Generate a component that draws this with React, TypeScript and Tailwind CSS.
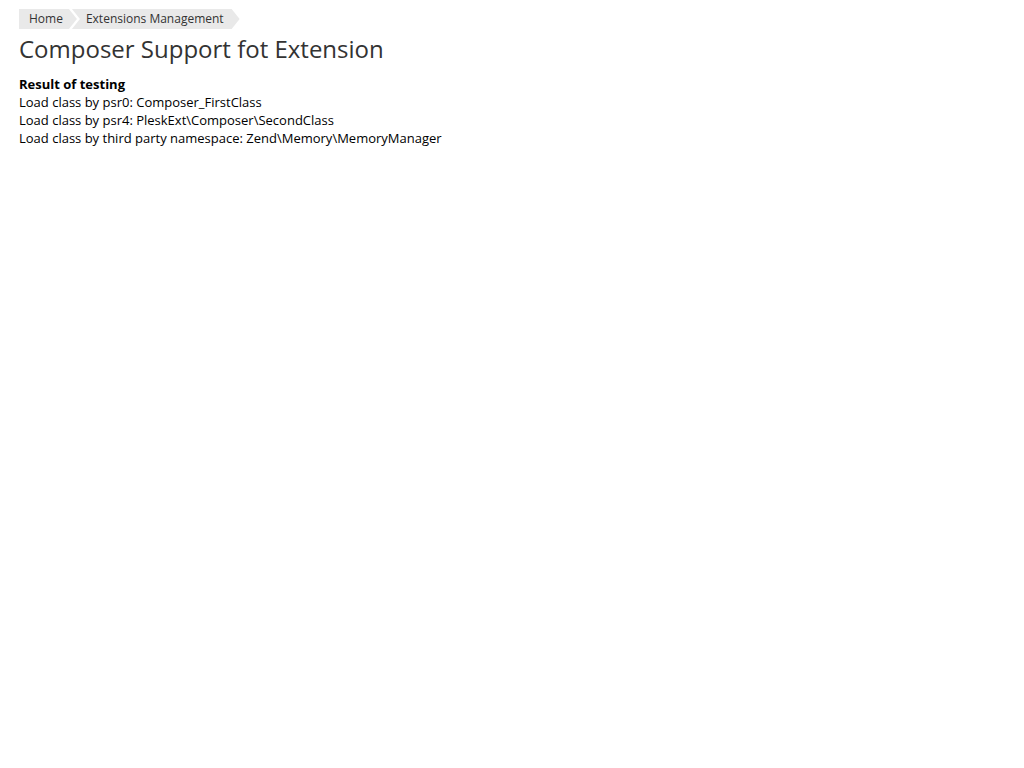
import React from "react";

export default function App() {
  const font = { fontFamily: '"Open Sans", "Noto Sans", sans-serif' };
  return (
    <div className="min-h-screen bg-white text-[#222] px-[19px] pt-[9px]" style={font}>
      <div className="flex items-center h-[20px] text-[12px] text-[#333]">
        <div
          className="h-[20px] flex items-center bg-[#e9e9e9] pl-[10px] pr-[14px]"
          style={{ clipPath: "polygon(0 0, calc(100% - 8px) 0, 100% 50%, calc(100% - 8px) 100%, 0 100%)" }}
        >
          Home
        </div>
        <div
          className="h-[20px] flex items-center bg-[#e9e9e9] pl-[14px] pr-[16px] -ml-[5px]"
          style={{ clipPath: "polygon(0 0, calc(100% - 8px) 0, 100% 50%, calc(100% - 8px) 100%, 0 100%, 8px 50%)" }}
        >
          Extensions Management
        </div>
      </div>
      <h1 className="text-[24px] leading-[32px] text-[#333] mt-[4px] font-normal">
        Composer Support fot Extension
      </h1>
      <div className="mt-[10px] text-[13px] leading-[18px] text-black">
        <div className="font-bold">Result of testing</div>
        <div>Load class by psr0: Composer_FirstClass</div>
        <div>Load class by psr4: PleskExt\Composer\SecondClass</div>
        <div>Load class by third party namespace: Zend\Memory\MemoryManager</div>
      </div>
    </div>
  );
}
